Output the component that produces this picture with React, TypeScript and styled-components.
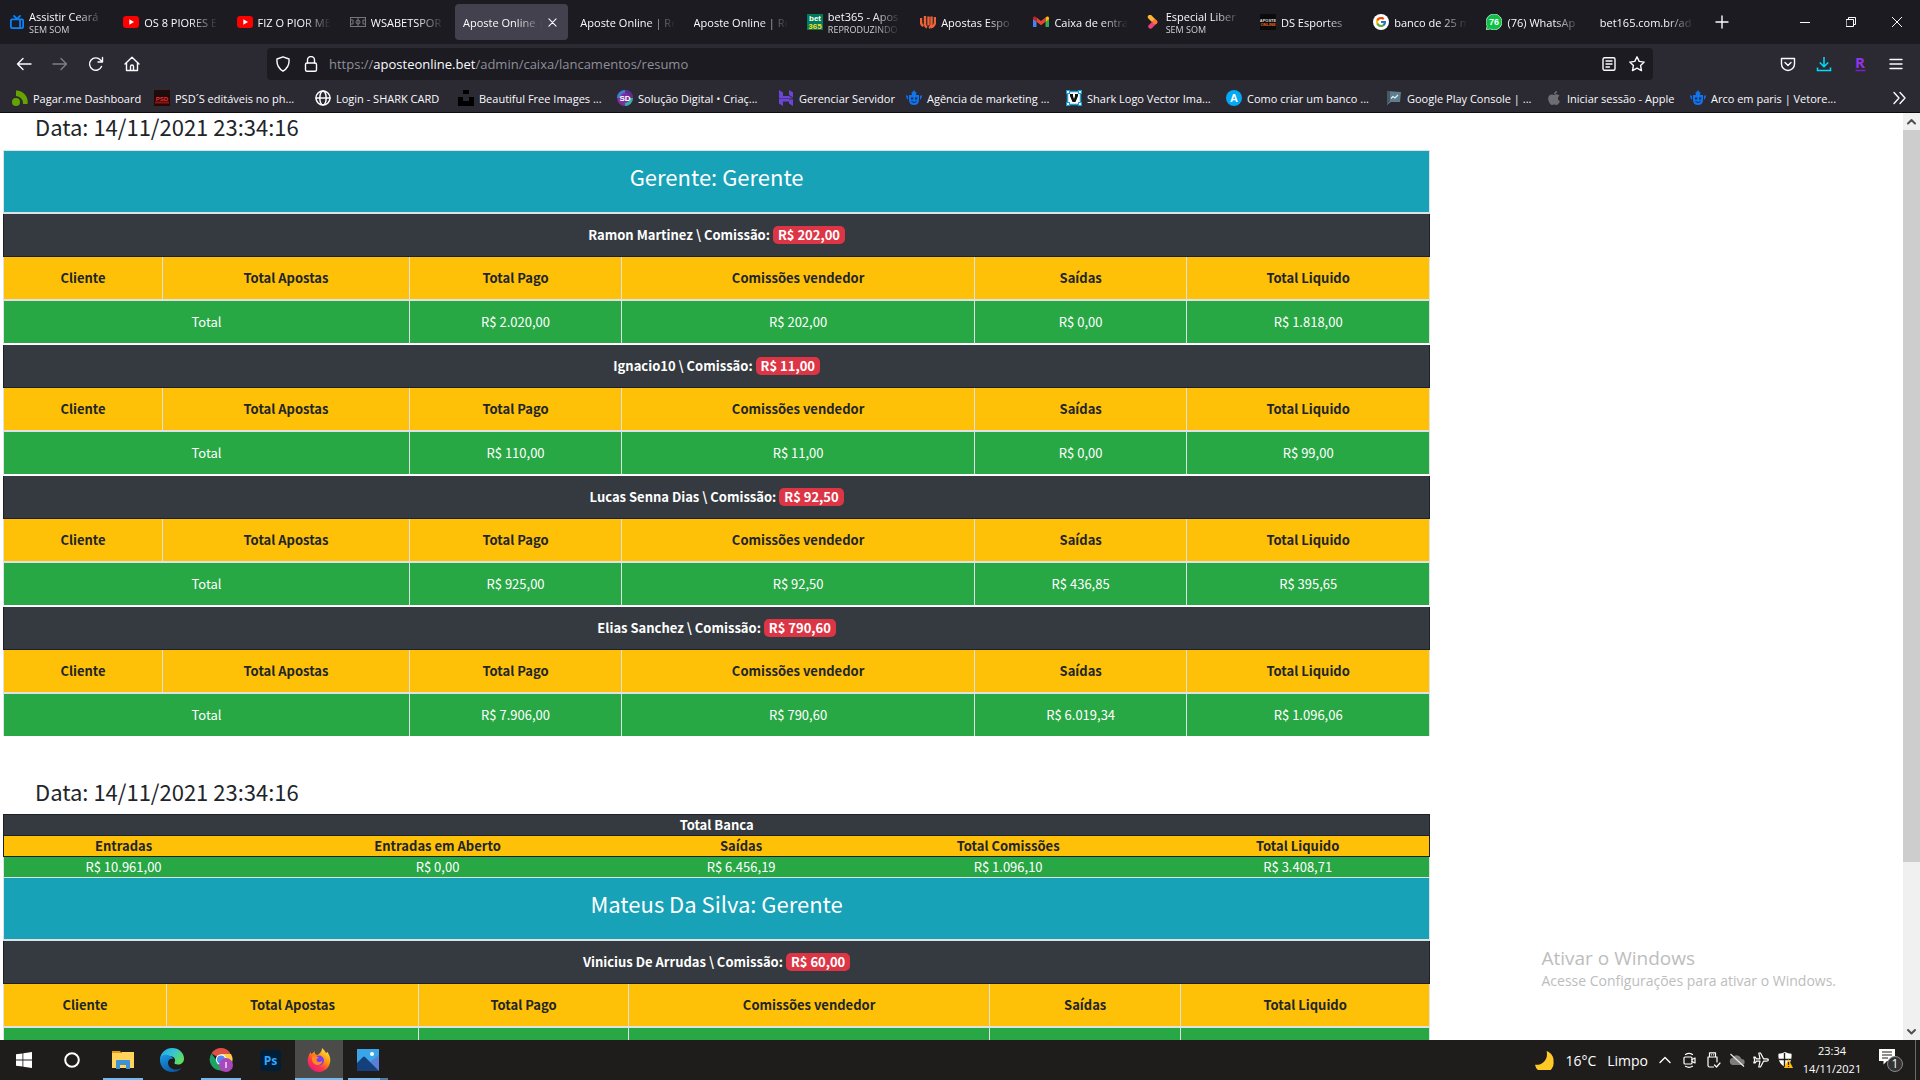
import React from "react";
import styled, { createGlobalStyle, css } from "styled-components";
import { FcGoogle } from "react-icons/fc";
import { FaApple } from "react-icons/fa";

const UI = `"Open Sans", "Noto Sans", sans-serif`;
const PAGE = `"Noto Sans CJK SC", "Noto Sans", sans-serif`;

const Global = createGlobalStyle`
  *, *::before, *::after { box-sizing: border-box; }
  body { margin: 0; background: #fff; overflow: hidden; }
  button, input { font: inherit; color: inherit; border: 0; padding: 0; margin: 0; background: none; }
  svg { display: block; flex: none; }
`;

const Desktop = styled.div`
  display: flex;
  flex-direction: column;
  height: 100vh;
  font-family: ${UI};
  font-size: 11px;
`;

/* ---------- browser chrome ---------- */

const TabStrip = styled.header`
  display: flex;
  align-items: center;
  height: 44px;
  background: #1c1b22;
  color: #fbfbfe;
`;

const Tabs = styled.div`
  display: flex;
  flex: 0 1 1703px;
  min-width: 0;
`;

const Tab = styled.button<{ $active?: boolean }>`
  display: flex;
  align-items: center;
  flex: 1 1 0;
  gap: 5px;
  min-width: 0;
  height: 36px;
  margin: 0 2px;
  padding: 0 ${(p) => (p.$active ? 11 : 7)}px 0 8px;
  border-radius: 4px;
  text-align: left;
  background: ${(p) => (p.$active ? "#42414d" : "transparent")};
`;

const TabText = styled.span`
  display: flex;
  flex: 1;
  flex-direction: column;
  min-width: 0;
  overflow: hidden;
  white-space: nowrap;
  line-height: 15px;
  mask-image: linear-gradient(to left, transparent, #000 28px);
`;

const TabState = styled.small`
  font-size: 9px;
  line-height: 12px;
  color: #d0d0d8;
`;

const StripButton = styled.button<{ $w: number }>`
  display: flex;
  align-items: center;
  justify-content: center;
  width: ${(p) => p.$w}px;
  height: 36px;
`;

const Spacer = styled.div`
  flex: 1;
`;

const Toolbar = styled.nav`
  display: flex;
  align-items: center;
  height: 40px;
  padding: 0 6px;
  background: #2b2a33;
  color: #fbfbfe;
`;

const ToolButton = styled.button<{ $dim?: boolean }>`
  display: flex;
  align-items: center;
  justify-content: center;
  width: 36px;
  height: 32px;
  opacity: ${(p) => (p.$dim ? 0.4 : 1)};
`;

const UrlBar = styled.div`
  display: flex;
  align-items: center;
  flex: 1;
  height: 32px;
  margin: 0 117px;
  padding: 0 2px;
  border-radius: 4px;
  background: #1c1b22;
`;

const UrlButton = styled.button`
  display: flex;
  align-items: center;
  justify-content: center;
  width: 28px;
  height: 28px;
`;

const Url = styled.a`
  flex: 1;
  padding-left: 4px;
  font-size: 13px;
  line-height: 18px;
  color: #8f8f99;
  text-decoration: none;
  b { font-weight: 400; color: #fbfbfe; }
`;

const Bookmarks = styled.nav`
  display: flex;
  align-items: center;
  height: 29px;
  padding: 0 3px 0 12px;
  background: #2b2a33;
  border-bottom: 1px solid #0c0c0d;
  color: #fbfbfe;
`;

const Bookmark = styled.a<{ $w: number }>`
  display: flex;
  align-items: center;
  gap: 5px;
  flex: 0 1 ${(p) => p.$w}px;
  min-width: 0;
  white-space: nowrap;
  color: inherit;
  text-decoration: none;
`;

/* ---------- page ---------- */

const Viewport = styled.div`
  display: flex;
  flex: 1;
  min-height: 0;
  background: #fff;
`;

const Page = styled.main`
  position: relative;
  flex: 1;
  min-width: 0;
  overflow: hidden;
  font-family: ${PAGE};
  font-size: 13px;
  line-height: 20px;
  color: #212529;
`;

const Report = styled.section`
  width: 75%;
  margin-left: 3px;
`;

const DateTitle = styled.h4<{ $spaced?: boolean }>`
  margin: 0;
  padding: ${(p) => (p.$spaced ? "42px 0 10px 32px" : "0 0 11px 32px")};
  font-size: 22px;
  font-weight: 400;
  line-height: 26px;
`;

const Grid = styled.table`
  width: 100%;
  table-layout: fixed;
  border-collapse: separate;
  border-spacing: 0;
  text-align: center;
  th, td { padding: 0; }
`;

const edges = (c: string) => css`
  border: 0 solid ${c};
  border-left-width: 1px;
  &:last-child { border-right-width: 1px; }
`;

const ManagerCell = styled.th`
  ${edges("#dee2e6")}
  border-top-width: 1px;
  border-bottom-width: 2px;
  height: 64px;
  background: #17a2b8;
  color: #fff;
  h4 {
    margin: 0 0 12px;
    font-size: 22px;
    font-weight: 400;
    line-height: 26px;
  }
`;

const SellerCell = styled.th`
  ${edges("#1d2124")}
  border-bottom-width: 1px;
  height: 43px;
  background: #343a40;
  color: #fff;
`;

const HeadCell = styled.th`
  ${edges("#dee2e6")}
  border-bottom-width: 2px;
  height: 44px;
  background: #ffc107;
`;

const SumCell = styled.td<{ $last?: boolean }>`
  ${edges("#dee2e6")}
  border-bottom: ${(p) => (p.$last ? 0 : 2)}px solid #fff;
  height: ${(p) => (p.$last ? 42 : 44)}px;
  background: #28a745;
  color: #fff;
`;

const Badge = styled.span`
  display: inline-block;
  padding: 0 5px;
  border-radius: 5px;
  line-height: 18px;
  background: #dc3545;
`;

const BankTitle = styled.th`
  ${edges("#1d2124")}
  border-top-width: 1px;
  border-bottom-width: 1px;
  height: 22px;
  background: #343a40;
  color: #fff;
`;

const BankHead = styled.th`
  border: 0 solid #1d2124;
  border-bottom-width: 1px;
  height: 21px;
  background: #ffc107;
  &:first-child { border-left-width: 1px; }
  &:last-child { border-right-width: 1px; }
`;

const BankCell = styled.td`
  border: 0 solid #dee2e6;
  height: 20px;
  background: #28a745;
  color: #fff;
  &:first-child { border-left-width: 1px; }
  &:last-child { border-right-width: 1px; }
`;

const Watermark = styled.aside`
  position: absolute;
  right: 67px;
  bottom: 49px;
  font-family: ${UI};
  font-size: 14px;
  line-height: 20px;
  color: #bdbdbd;
  strong {
    display: block;
    font-size: 19px;
    font-weight: 400;
    line-height: 26px;
  }
`;

const ScrollTrack = styled.div`
  display: flex;
  flex-direction: column;
  align-items: center;
  width: 17px;
  background: #f0f0f0;
`;

const ScrollArrow = styled.button`
  display: flex;
  align-items: center;
  justify-content: center;
  width: 17px;
  height: 17px;
  color: #505050;
`;

const ScrollThumb = styled.div`
  flex: 0 0 79%;
  width: 17px;
  background: #cdcdcd;
`;

/* ---------- taskbar ---------- */

const Taskbar = styled.footer`
  display: flex;
  align-items: stretch;
  height: 40px;
  background: #1e1d1c;
  color: #fff;
`;

const TaskGroup = styled.div<{ $pad?: boolean }>`
  display: flex;
  gap: ${(p) => (p.$pad ? 1 : 0)}px;
  padding-left: ${(p) => (p.$pad ? 3 : 0)}px;
`;

const TaskButton = styled.button<{ $running?: boolean; $active?: boolean; $stacked?: boolean }>`
  display: flex;
  align-items: center;
  justify-content: center;
  position: relative;
  width: 48px;
  background: ${(p) => (p.$active ? "#4b4b4a" : "transparent")};
  &::after {
    content: "";
    display: ${(p) => (p.$running ? "block" : "none")};
    position: absolute;
    bottom: 0;
    left: ${(p) => (p.$active ? 0 : 4)}px;
    right: ${(p) => (p.$active ? 0 : 4)}px;
    height: 2px;
    background: ${(p) => (p.$stacked ? "linear-gradient(to right, #76b9ed 80%, #4f7ea3 80%)" : "#76b9ed")};
  }
`;

const Weather = styled.button`
  display: flex;
  align-items: center;
  gap: 11px;
  margin-right: 5px;
  font-size: 14px;
`;

const TrayButton = styled.button`
  display: flex;
  align-items: center;
  justify-content: center;
  width: 24px;
`;

const Clock = styled.time`
  display: flex;
  flex-direction: column;
  justify-content: center;
  width: 70px;
  text-align: center;
  font-size: 11px;
  line-height: 18px;
`;

const Notices = styled.button`
  display: flex;
  align-items: center;
  justify-content: center;
  width: 47px;
`;

const ShowDesktop = styled.button`
  width: 5px;
  margin-left: 1px;
  border-left: 1px solid #6b6b6b;
`;

/* ---------- icons ---------- */

type IconProps = { s?: number; box?: string; children: React.ReactNode; w?: number };
const Icon = ({ s = 16, box = "0 0 16 16", children }: IconProps) => (
  <svg width={s} height={s} viewBox={box} fill="none" aria-hidden="true">{children}</svg>
);
const Line = ({ s = 16, box = "0 0 16 16", w = 1.4, children }: IconProps) => (
  <svg width={s} height={s} viewBox={box} fill="none" stroke="currentColor" strokeWidth={w} strokeLinecap="round" strokeLinejoin="round" aria-hidden="true">{children}</svg>
);

const TvIcon = () => (
  <Icon s={14}><g stroke="#0a84ff" strokeWidth="2"><rect x="1" y="5" width="14" height="10" rx="1.5" /><path d="M4 0.500l4 4 4-4M11.500 5v10" /></g></Icon>
);
const YoutubeIcon = () => (
  <Icon><rect y="2" width="16" height="12" rx="3" fill="red" /><path d="M6.300 5.300v5.400L11 8z" fill="#fff" /></Icon>
);
const PitchIcon = () => (
  <Icon><g stroke="#77767e"><rect x="0.500" y="3.500" width="15" height="9" /><path d="M8 3.500v9M.5 6h2.500v4H.5M15.500 6H13v4h2.500" /><circle cx="8" cy="8" r="2" /></g></Icon>
);
const Bet365Icon = () => (
  <Icon>
    <rect width="16" height="16" fill="#027b5b" />
    <text x="8" y="7" textAnchor="middle" fontSize="8" fontWeight="700" fontFamily="Liberation Sans" fill="#fff">bet</text>
    <text x="8" y="14.500" textAnchor="middle" fontSize="8" fontWeight="700" fontFamily="Liberation Sans" fill="#ffdf1b">365</text>
  </Icon>
);
const FlameWIcon = () => (
  <Icon><path d="M1 4v4q0 3 2.500 4M5 2v8q0 2.500 2 3.500M8.500 2.500v9M11.500 2.500v8q0 2-2.500 3.500M15 3v5q0 4-4 5.500" stroke="#ee6338" strokeWidth="2.400" /></Icon>
);
const GmailIcon = () => (
  <Icon><path d="M0 4v9h3.500V7z" fill="#4285f4" /><path d="M16 4v9h-3.500V7z" fill="#34a853" /><path d="M12.500 3.500L14 2.600Q16 2 16 4v1.200l-3.500 2.600z" fill="#fbbc04" /><path d="M3.500 3.500L2 2.600Q0 2 0 4v1.200l3.500 2.600z" fill="#c5221f" /><path d="M3.500 3.500L8 7l4.500-3.500v4.300L8 11.200 3.500 7.800z" fill="#ea4335" /></Icon>
);
const ArrowLogo = () => (
  <Icon s={14} box="2 1 14 14"><path d="M5 3l5 5" stroke="#ffb52e" strokeWidth="4.500" strokeLinecap="round" /><path d="M10 8l-4.500 4.500" stroke="#e9407a" strokeWidth="4.500" strokeLinecap="round" /><circle cx="10" cy="8" r="2.250" fill="#ff7a2f" /></Icon>
);
const ApostaIcon = () => (
  <Icon>
    <rect width="16" height="16" fill="#0b0b0b" />
    <text x="8" y="7.500" textAnchor="middle" fontSize="4" fontWeight="700" fontFamily="Liberation Sans" fill="#ddd">APOSTE</text>
    <text x="8" y="11.500" textAnchor="middle" fontSize="4" fontWeight="700" fontFamily="Liberation Sans" fill="#f26a21">ONLINE</text>
  </Icon>
);
const GoogleIcon = () => (
  <Icon><circle cx="8" cy="8" r="8" fill="#fff" /><g transform="translate(2 2)"><FcGoogle size={12} /></g></Icon>
);
const WhatsIcon = () => (
  <Icon>
    <path d="M8 0a8 8 0 1 1-3.800 15L0 16l1.100-4A8 8 0 0 1 8 0z" fill="#0cc143" stroke="#fff" strokeWidth="0.600" />
    <text x="8" y="11" textAnchor="middle" fontSize="9" fontWeight="700" fontFamily="Liberation Sans" fill="#fff">76</text>
  </Icon>
);

const PagarIcon = () => (
  <Icon><circle cx="4" cy="12" r="4" fill="#65a300" /><path d="M4 0.500A11.500 11.500 0 0 1 15.500 14h-4.500A7.500 7.500 0 0 0 4 6z" fill="#65a300" /></Icon>
);
const PsdIcon = () => (
  <Icon>
    <rect width="16" height="16" fill="#2a0707" /><path d="M0 2h16v3H0z" fill="#111" /><path d="M1 11.500h14v2H1z" fill="#8c1515" />
    <text x="8" y="10.500" textAnchor="middle" fontSize="6" fontWeight="700" fontFamily="Liberation Sans" fill="#e33">PSD</text>
  </Icon>
);
const GlobeIcon = () => (
  <Line w={1.5}><circle cx="8" cy="8" r="7" /><ellipse cx="8" cy="8" rx="3.200" ry="7" /><path d="M1 8h14" /></Line>
);
const UnsplashIcon = () => (
  <Icon><path d="M5 0h6v4H5zM0 7h5v4h6V7h5v9H0z" fill="#000" /></Icon>
);
const SdIcon = () => (
  <Icon>
    <circle cx="8" cy="8" r="8" fill="#7a2f9c" /><path d="M8 0a8 8 0 0 1 8 8h-3a5 5 0 0 0-5-5z" fill="#5c2d91" /><path d="M0 8a8 8 0 0 1 8-8v3a5 5 0 0 0-5 5z" fill="#3c7fd0" /><path d="M16 8a8 8 0 0 1-8 8v-3a5 5 0 0 0 5-5z" fill="#31b2a5" />
    <text x="8" y="11" textAnchor="middle" fontSize="8" fontWeight="700" fontFamily="Liberation Sans" fill="#fff">SD</text>
  </Icon>
);
const HIcon = () => (
  <Icon><path d="M1 0l4 2.500V6h6l4 2.500H1zM11 0l4 2.500V7.500L11 5zM1 9h10l0 0V9.500h4V16l-4-2.500V11.500H5V16l-4-2.500z" fill="#6b46d6" /></Icon>
);
const CrownBotIcon = () => (
  <Icon><path d="M5.500 2.500L7 1.500 8 0l1 1.500 1.500 1L10 5H6z" fill="#1273eb" /><path d="M3 5h10v5q0 5-5 5t-5-5z" fill="#1273eb" /><path d="M0 5l2 1v4L.5 8zM16 5l-2 1v4l1.500-2z" fill="#1273eb" /><path d="M5 7.500h2.200v2H5zM9 7.500h2.200v2H9z" fill="#0b2f66" /><path d="M5.500 11.500q2.500 2 5 0" stroke="#0b2f66" /></Icon>
);
const VectorIcon = () => (
  <Icon>
    <rect x="1.500" y="1.500" width="13" height="13" fill="#fff" stroke="#18a0cf" strokeWidth="1.500" />
    <g fill="#fff" stroke="#18a0cf"><rect x="0.500" y="0.500" width="3" height="3" /><rect x="12.500" y="0.500" width="3" height="3" /><rect x="0.500" y="12.500" width="3" height="3" /><rect x="12.500" y="12.500" width="3" height="3" /></g>
    <path d="M4 4h3v2l1 3 1-3V4h3v2l-2.500 6h-3L4 6z" fill="#111" />
  </Icon>
);
const AIcon = () => (
  <Icon>
    <circle cx="8" cy="8" r="8" fill="#03a9f4" />
    <text x="8" y="12" textAnchor="middle" fontSize="11" fontWeight="700" fontFamily="Liberation Sans" fill="#fff">A</text>
  </Icon>
);
const PlayConsoleIcon = () => (
  <Icon><path d="M1 1l14 1-1 10H5l-4 3z" fill="#607d8b" /><path d="M1 1h3v10l-3 4z" fill="#455a64" /><path d="M5 8.500l2-2 2 1.500 3-3" stroke="#d7f3ff" strokeWidth="1.200" /></Icon>
);

const StartIcon = () => (
  <Icon><path d="M0 2.300l6.500-.9v6.200H0zM7.300 1.300L16 0v7.600H7.300zM0 8.400h6.500v6.200L0 13.700zM7.300 8.400H16V16l-8.700-1.300z" fill="#fff" /></Icon>
);
const CortanaIcon = () => (
  <Icon><circle cx="8" cy="8" r="6.800" stroke="#fff" strokeWidth="2" /></Icon>
);
const FolderIcon = () => (
  <Icon s={22} box="0 0 22 22"><path d="M0 2h8l1.500 2H0z" fill="#e3a008" /><path d="M0 4h9l1-1h12v16H0z" fill="#ffd35c" /><path d="M4 12q0-1 1-1h12q1 0 1 1v8h-4v-4H8v4H4z" fill="#3d91d6" /></Icon>
);
const EdgeIcon = () => (
  <Icon s={24} box="0 0 24 24">
    <defs>
      <linearGradient id="eg" x1="0" y1="0" x2="1" y2="0.600"><stop offset="0" stopColor="#1fa5e8" /><stop offset="0.500" stopColor="#35c2d8" /><stop offset="1" stopColor="#5fe05a" /></linearGradient>
      <linearGradient id="eb" x1="0" y1="0" x2="0.600" y2="1"><stop offset="0" stopColor="#1a9ae6" /><stop offset="1" stopColor="#0c59a4" /></linearGradient>
    </defs>
    <path d="M0 11C1 4 6 0 12 0c7 0 12 5 12 10.500 0 4-3 6-6 6-2.500 0-4-1-3.500-2 1.500-2 .5-6.500-5-6.500C5 8 1 9 0 13z" fill="url(#eg)" />
    <path d="M0 12c0-4 4-6 8-5 3 .7 5 2.500 5 4-3-1-5 1-5 4 0 4 4 7 9 6.500 2-.2 3.500-1 4.500-1.500C19 23 15.500 24 12 24 5 24 0 18.500 0 12z" fill="url(#eb)" />
  </Icon>
);
const ChromeIcon = () => (
  <Icon s={24} box="-1 0 24 24">
    <path d="M11 11L1.500 5.500A11 11 0 0 1 20.500 5.500z" fill="#dd5144" /><path d="M11 6h10a11 11 0 0 1-10 16.500L15 13z" fill="#ffcd46" /><path d="M1.500 5.500a11 11 0 0 0 9.500 17l4-7-7-1z" fill="#1da462" />
    <circle cx="11" cy="11.500" r="5.200" fill="#fff" /><circle cx="11" cy="11.500" r="4" fill="#4c8bf5" /><circle cx="16" cy="17" r="7" fill="#ab47bc" /><path d="M16 14v6" stroke="#eddcf2" strokeWidth="1.500" />
  </Icon>
);
const PsIcon = () => (
  <Icon s={21} box="0 0 21 21">
    <rect width="21" height="21" rx="4" fill="#001e36" />
    <text x="10.500" y="15" textAnchor="middle" fontSize="12" fontWeight="700" fontFamily="Open Sans" fill="#31a8ff">Ps</text>
  </Icon>
);
const FirefoxIcon = () => (
  <Icon s={24} box="0 0 24 24">
    <defs><linearGradient id="ff" x1="0.900" y1="0" x2="0.200" y2="1"><stop offset="0" stopColor="#fff44f" /><stop offset="0.400" stopColor="#ff980e" /><stop offset="0.700" stopColor="#ff3647" /><stop offset="1" stopColor="#e31587" /></linearGradient></defs>
    <path d="M15 0c2 2 3 3 4 5 1 0 1-1 1-1.500C22 6 23.500 9 23.300 12.500 23 19 18 24 12 24S.7 19 .7 13C.7 9 2 7 3.500 4c.2 1 .5 1.500 1 2C6 5 6.500 4.500 7.500 3c0 2 .5 3.500 2.500 4C12 6.500 15 4 15 0z" fill="url(#ff)" />
    <circle cx="12" cy="12.500" r="5" fill="#7a3ff0" /><path d="M5 9c2-2 5-1 7 1-2 0-2.500 1-2.500 2 0 2 3 3 6 1-1 4-5 5-8 3-2-1.500-3-4-2.500-7z" fill="#ff8a1e" />
  </Icon>
);
const PhotosIcon = () => (
  <Icon s={22} box="0 0 22 22"><rect width="22" height="22" fill="#3aa5e8" /><path d="M22 6v16H11l1-8z" fill="#5a7fd6" /><path d="M0 14l6-6q1-1 2 0l14 14H0z" fill="#15407e" /><circle cx="15" cy="5" r="2" fill="#fff" /></Icon>
);
const MoonIcon = () => (
  <Icon s={19} box="0 0 18 18"><path d="M11 0c5 2 7 6 6.500 10A8.500 8.500 0 0 1 0 13c6 1 13-4 11-13z" fill="#ffc928" /></Icon>
);

/* ---------- data ---------- */

type TabData = { label: string; state?: string; icon?: React.ReactNode; active?: boolean };
const tabs: TabData[] = [
  { label: "Assistir Ceará", state: "SEM SOM", icon: <TvIcon /> },
  { label: "OS 8 PIORES E", icon: <YoutubeIcon /> },
  { label: "FIZ O PIOR ME", icon: <YoutubeIcon /> },
  { label: "WSABETSPOR", icon: <PitchIcon /> },
  { label: "Aposte Online |", active: true },
  { label: "Aposte Online | Re" },
  { label: "Aposte Online | Re" },
  { label: "bet365 - Apos", state: "REPRODUZINDO", icon: <Bet365Icon /> },
  { label: "Apostas Espo", icon: <FlameWIcon /> },
  { label: "Caixa de entra", icon: <GmailIcon /> },
  { label: "Especial Liber", state: "SEM SOM", icon: <ArrowLogo /> },
  { label: "DS Esportes", icon: <ApostaIcon /> },
  { label: "banco de 25 m", icon: <GoogleIcon /> },
  { label: "(76) WhatsAp", icon: <WhatsIcon /> },
  { label: "bet165.com.br/ad" },
];

const bookmarks: [string, number, React.ReactNode][] = [
  ["Pagar.me Dashboard", 142, <PagarIcon />],
  ["PSD´S editáveis no ph...", 161, <PsdIcon />],
  ["Login - SHARK CARD", 143, <GlobeIcon />],
  ["Beautiful Free Images ...", 159, <UnsplashIcon />],
  ["Solução Digital • Criaç...", 161, <SdIcon />],
  ["Gerenciar Servidor", 128, <HIcon />],
  ["Agência de marketing ...", 160, <CrownBotIcon />],
  ["Shark Logo Vector Ima...", 160, <VectorIcon />],
  ["Como criar um banco ...", 160, <AIcon />],
  ["Google Play Console | ...", 160, <PlayConsoleIcon />],
  ["Iniciar sessão - Apple", 144, <FaApple size={16} color="#6d6d72" />],
  ["Arco em paris | Vetore...", 160, <CrownBotIcon />],
];

const columns = ["Cliente", "Total Apostas", "Total Pago", "Comissões vendedor", "Saídas", "Total Liquido"];

type Seller = { name: string; fee: string; sums: string[] };
const sellers: Seller[] = [
  { name: "Ramon Martinez", fee: "R$ 202,00", sums: ["R$ 2.020,00", "R$ 202,00", "R$ 0,00", "R$ 1.818,00"] },
  { name: "Ignacio10", fee: "R$ 11,00", sums: ["R$ 110,00", "R$ 11,00", "R$ 0,00", "R$ 99,00"] },
  { name: "Lucas Senna Dias", fee: "R$ 92,50", sums: ["R$ 925,00", "R$ 92,50", "R$ 436,85", "R$ 395,65"] },
  { name: "Elias Sanchez", fee: "R$ 790,60", sums: ["R$ 7.906,00", "R$ 790,60", "R$ 6.019,34", "R$ 1.096,06"] },
];
const mateusSellers: Seller[] = [
  { name: "Vinicius De Arrudas", fee: "R$ 60,00", sums: ["R$ 600,00", "R$ 60,00", "R$ 0,00", "R$ 540,00"] },
];

const bank: [string, string][] = [
  ["Entradas", "R$ 10.961,00"],
  ["Entradas em Aberto", "R$ 0,00"],
  ["Saídas", "R$ 6.456,19"],
  ["Total Comissões", "R$ 1.096,10"],
  ["Total Liquido", "R$ 3.408,71"],
];

const Col = styled.col<{ $share: number }>`
  width: calc(${(p) => p.$share} / 1427 * 100%);
`;

const Cols = ({ shares }: { shares: number[] }) => (
  <colgroup>{shares.map((s, i) => <Col key={i} $share={s} />)}</colgroup>
);

const ManagerTable = ({ title, list, shares }: { title: string; list: Seller[]; shares: number[] }) => (
  <Grid>
    <Cols shares={shares} />
    <thead>
      <tr><ManagerCell colSpan={6}><h4>{title}</h4></ManagerCell></tr>
    </thead>
    {list.map((s, i) => (
      <tbody key={s.name}>
        <tr><SellerCell colSpan={6}>{s.name} \ Comissão: <Badge>{s.fee}</Badge></SellerCell></tr>
        <tr>{columns.map((c) => <HeadCell key={c}>{c}</HeadCell>)}</tr>
        <tr>
          <SumCell colSpan={2} $last={i === list.length - 1}>Total</SumCell>
          {s.sums.map((v, k) => <SumCell key={k} $last={i === list.length - 1}>{v}</SumCell>)}
        </tr>
      </tbody>
    ))}
  </Grid>
);

export default function App() {
  return (
    <Desktop>
      <Global />
      <TabStrip>
        <Tabs>
          {tabs.map((t, i) => (
            <Tab key={i} $active={t.active}>
              {t.icon}
              <TabText>{t.label}{t.state && <TabState>{t.state}</TabState>}</TabText>
              {t.active && <Line s={9} box="0 0 10 10" w={1.2}><path d="M1 1l8 8M9 1l-8 8" /></Line>}
            </Tab>
          ))}
        </Tabs>
        <StripButton $w={38} aria-label="Nova aba"><Line s={14} box="0 0 14 14"><path d="M7 1v12M1 7h12" /></Line></StripButton>
        <Spacer />
        <StripButton $w={46} aria-label="Minimizar"><Line s={10} box="0 0 10 10" w={1}><path d="M0 5.500h10" /></Line></StripButton>
        <StripButton $w={46} aria-label="Restaurar"><Line s={10} box="0 0 10 10" w={1}><path d="M.5 2.500h7v7h-7zM2.500 2.500v-2h7v7h-2" /></Line></StripButton>
        <StripButton $w={46} aria-label="Fechar"><Line s={10} box="0 0 10 10" w={1}><path d="M0 0l10 10M10 0L0 10" /></Line></StripButton>
      </TabStrip>

      <Toolbar>
        <ToolButton aria-label="Voltar"><Line><path d="M15 8H1.500M7 2.500L1.500 8 7 13.500" /></Line></ToolButton>
        <ToolButton $dim aria-label="Avançar"><Line><path d="M1 8h13.500M9 2.500L14.500 8 9 13.500" /></Line></ToolButton>
        <ToolButton aria-label="Recarregar"><Line><path d="M13.500 10.500a6.200 6.200 0 1 1-1-6.500L14.500 6M14.500 1.500V6H10" /></Line></ToolButton>
        <ToolButton aria-label="Início"><Line><path d="M1 8l7-6.800L15 8M2.500 7v7.500h11V7M6.500 14.500v-4q0-1.500 1.500-1.500t1.500 1.500v4" /></Line></ToolButton>
        <UrlBar>
          <UrlButton aria-label="Proteção"><Line><path d="M8 .8l6 2.200q.8 8-6 12.200Q1.200 11 2 3z" /></Line></UrlButton>
          <UrlButton aria-label="Conexão segura"><Line><rect x="2.500" y="7" width="11" height="8.200" rx="1.500" /><path d="M4.500 7V4a3.500 3.500 0 0 1 7 0v3" /></Line></UrlButton>
          <Url href="#">https://<b>aposteonline.bet</b>/admin/caixa/lancamentos/resumo</Url>
          <UrlButton aria-label="Modo leitura"><Line s={14} box="0 0 14 14"><rect x="1" y="0.700" width="12" height="12.600" rx="1.500" /><path d="M4 4h6M4 7h6M4 10h3.500" /></Line></UrlButton>
          <UrlButton aria-label="Favoritar"><Line><path d="M8 .8l2.200 4.600 5 .7-3.600 3.500.9 5L8 12.200l-4.500 2.400.9-5L.8 6.100l5-.7z" /></Line></UrlButton>
        </UrlBar>
        <ToolButton aria-label="Pocket"><Line><path d="M1.500 2.500h13V8a6.500 6.500 0 0 1-13 0zM5 6.500L8 9.500l3-3" /></Line></ToolButton>
        <ToolButton aria-label="Downloads"><Icon><path d="M8 1v9.500M3.800 6.500L8 10.700l4.200-4.200M1.500 11.500v3h13v-3" stroke="#00ddff" strokeWidth="1.500" /></Icon></ToolButton>
        <ToolButton aria-label="R">
          <Icon><text x="8" y="12" textAnchor="middle" fontSize="15" fontWeight="700" fontFamily="Open Sans" fill="#9333ea">R</text><path d="M3.500 14.500h10" stroke="#7a1fd0" strokeWidth="1.500" /></Icon>
        </ToolButton>
        <ToolButton aria-label="Menu"><Line s={14} box="0 0 14 14"><path d="M1 2.500h12M1 7h12M1 11.500h12" /></Line></ToolButton>
      </Toolbar>

      <Bookmarks>
        {bookmarks.map(([label, w, icon]) => (
          <Bookmark key={label} href="#" $w={w}>{icon}{label}</Bookmark>
        ))}
        <Spacer />
        <ToolButton aria-label="Mais favoritos"><Line><path d="M3 2.500L8 8l-5 5.500M9 2.500L14 8l-5 5.500" /></Line></ToolButton>
      </Bookmarks>

      <Viewport>
        <Page>
          <Report>
            <DateTitle>Data: 14/11/2021 23:34:16</DateTitle>
            <ManagerTable title="Gerente: Gerente" list={sellers} shares={[159, 247, 212, 353, 212, 244]} />
            <DateTitle $spaced>Data: 14/11/2021 23:34:16</DateTitle>
            <Grid>
              <Cols shares={[240, 389, 218, 316, 264]} />
              <thead>
                <tr><BankTitle colSpan={5}>Total Banca</BankTitle></tr>
                <tr>{bank.map(([h]) => <BankHead key={h}>{h}</BankHead>)}</tr>
              </thead>
              <tbody>
                <tr>{bank.map(([h, v]) => <BankCell key={h}>{v}</BankCell>)}</tr>
              </tbody>
            </Grid>
            <ManagerTable title="Mateus Da Silva: Gerente" list={mateusSellers} shares={[163, 252, 210, 361, 191, 250]} />
          </Report>
          <Watermark><strong>Ativar o Windows</strong>Acesse Configurações para ativar o Windows.</Watermark>
        </Page>
        <ScrollTrack>
          <ScrollArrow aria-label="Rolar para cima"><Line s={9} box="0 0 9 9" w={2}><path d="M1 6.500L4.500 3 8 6.500" /></Line></ScrollArrow>
          <ScrollThumb />
          <Spacer />
          <ScrollArrow aria-label="Rolar para baixo"><Line s={9} box="0 0 9 9" w={2}><path d="M1 3l3.500 3.500L8 3" /></Line></ScrollArrow>
        </ScrollTrack>
      </Viewport>

      <Taskbar>
        <TaskGroup>
          <TaskButton aria-label="Iniciar"><StartIcon /></TaskButton>
          <TaskButton aria-label="Cortana"><CortanaIcon /></TaskButton>
        </TaskGroup>
        <TaskGroup $pad>
          <TaskButton $running aria-label="Explorador de Arquivos"><FolderIcon /></TaskButton>
          <TaskButton aria-label="Edge"><EdgeIcon /></TaskButton>
          <TaskButton $running aria-label="Chrome"><ChromeIcon /></TaskButton>
          <TaskButton aria-label="Photoshop"><PsIcon /></TaskButton>
          <TaskButton $running $active aria-label="Firefox"><FirefoxIcon /></TaskButton>
          <TaskButton $running $stacked aria-label="Fotos"><PhotosIcon /></TaskButton>
        </TaskGroup>
        <Spacer />
        <Weather><MoonIcon /><span>16°C</span><span>Limpo</span></Weather>
        <TrayButton aria-label="Ícones ocultos"><Line s={12} box="0 0 12 12"><path d="M1 8.500l5-5 5 5" /></Line></TrayButton>
        <TrayButton aria-label="Câmera"><Line w={1.2}><rect x="3" y="5" width="8" height="7" rx="1" /><path d="M11 7.500l3-1.500v5L11 9.500M4.500 2.500Q8 .3 11.500 2.500M4.500 14.300q3.500 2 7 0" /></Line></TrayButton>
        <TrayButton aria-label="USB"><Line w={1.2}><path d="M4.500 5V.8h6V5M3 5h9v5M3 5v8.500q0 1.500 1.500 1.500h4M9.500 13l2 2L15 11M6.500 2.800h.1M8.500 2.800h.1" /></Line></TrayButton>
        <TrayButton aria-label="OneDrive"><Icon><path d="M4 13a3.700 3.700 0 0 1-.2-7.300A4.600 4.600 0 0 1 12.300 7 3 3 0 0 1 13 13z" fill="#7d7d7d" /><path d="M1.500 2L15 14.500" stroke="#e8e8e8" strokeWidth="1.300" /></Icon></TrayButton>
        <TrayButton aria-label="Modo avião"><Line w={1.2}><path d="M15.300 8q0-1.200-1.800-1.200H10.500L7.500 1H5.800L7 6.800H3.500L2 5H.8l.9 3-.9 3H2l1.500-1.800H7L5.800 15h1.700l3-5.800h3q1.800 0 1.800-1.200z" /></Line></TrayButton>
        <TrayButton aria-label="Segurança"><Icon><path d="M8 0q3 1.800 6.500 1.800Q15.500 11 8 15 .5 11 1.500 1.800 5 1.800 8 0z" fill="#fff" /><path d="M7.500 1v14M1.500 7.500h13" stroke="#1e1d1c" strokeWidth="1.400" /><path d="M11.500 7L16 16H7z" fill="#ffb900" /><path d="M11.500 10v3M11.500 14v1" stroke="#222" strokeWidth="1.200" /></Icon></TrayButton>
        <Clock><span>23:34</span><span>14/11/2021</span></Clock>
        <Notices aria-label="Notificações">
          <Icon s={24} box="0 0 24 24">
            <path d="M0 1h16v12H8l-3.500 3.500V13H0z" fill="#fff" /><path d="M3 4h10M3 7h10M3 10h6" stroke="#1e1d1c" strokeWidth="1.200" />
            <circle cx="16" cy="16" r="7.500" fill="#333" stroke="#8a8a8a" />
            <text x="16" y="20" textAnchor="middle" fontSize="12" fontFamily="Open Sans" fill="#fff">1</text>
          </Icon>
        </Notices>
        <ShowDesktop aria-label="Mostrar área de trabalho" />
      </Taskbar>
    </Desktop>
  );
}
